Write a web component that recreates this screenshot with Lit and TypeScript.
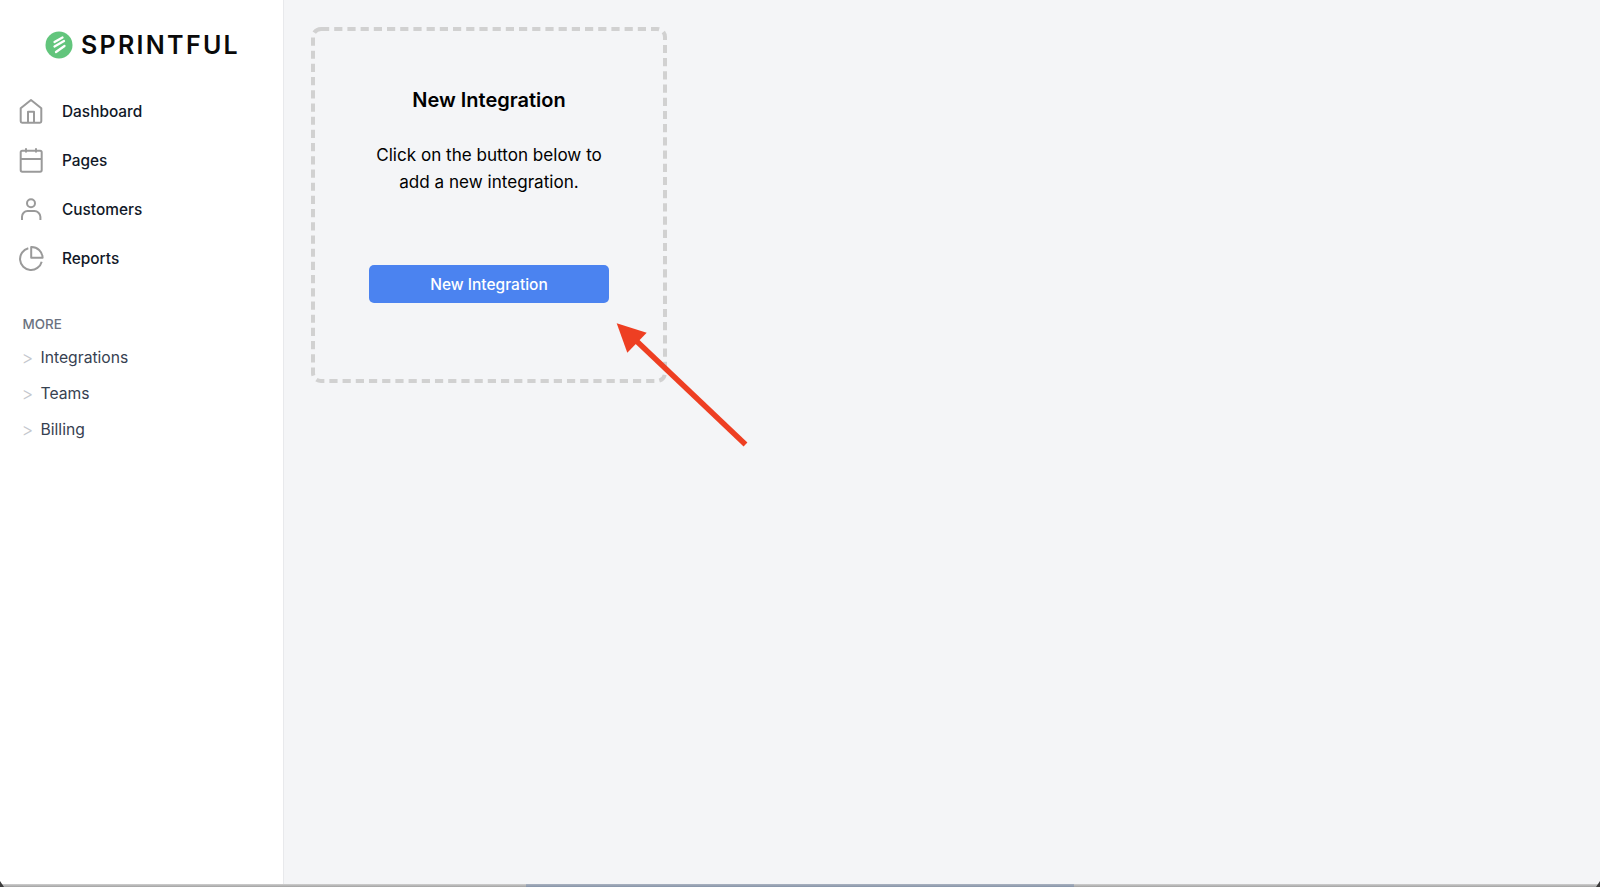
import { LitElement, html, css, svg } from "lit";
import { customElement } from "lit/decorators.js";

const navItems = [
  { label: "Dashboard", icon: svg`<path d="M2.7 10.3 13 2l10.3 8.3V23.3a1.4 1.4 0 0 1-1.4 1.4H4.1a1.4 1.4 0 0 1-1.4-1.4z"/><path d="M10 24.7V13.8h6v10.9"/>` },
  { label: "Pages", icon: svg`<rect x="2.7" y="3.7" width="21" height="21" rx="1.6"/><path d="M2.7 12h21M8 1.3V5.5M18 1.3V5.5"/>` },
  { label: "Customers", icon: svg`<circle cx="13" cy="7.3" r="4"/><path d="M4 24v-3.3a5.6 5.6 0 0 1 5.6-5.6h6.8a6 6 0 0 1 6 5.6V24"/>` },
  { label: "Reports", icon: svg`<path d="M10.3 3.3A11 11 0 1 0 23.7 16.7"/><path d="M13.2 2A11 11 0 0 1 24.6 12.7H13.2z"/>` },
];
const moreItems = ["Integrations", "Teams", "Billing"];

@customElement("app-root")
export class AppRoot extends LitElement {
  static styles = css`
    :host {
      display: block;
      height: 887px;
      position: relative;
      overflow: hidden;
      font-family: Inter, "Liberation Sans", sans-serif;
      background: #f4f5f7;
    }
    .layout { display: flex; height: 100%; }
    .sidebar {
      width: 284px;
      flex: none;
      box-sizing: border-box;
      background: #fff;
      border-right: 1px solid #e8e9ec;
      padding: 30px 0 0 18px;
    }
    .brand {
      display: flex;
      align-items: center;
      gap: 8px;
      margin-left: 27px;
      height: 31px;
      font-size: 25px;
      line-height: 31px;
      font-weight: 600;
      letter-spacing: 2.3px;
      color: #0a0a0a;
    }
    .brand svg { width: 28px; height: 28px; flex: none; margin-top: -2px; }
    .nav { display: flex; flex-direction: column; gap: 23px; margin-top: 37px; }
    .nav-item {
      display: flex;
      align-items: center;
      gap: 18px;
      height: 26px;
      font-size: 15.4px;
      font-weight: 500;
      color: #111827;
    }
    .nav-item svg {
      width: 26px;
      height: 26px;
      flex: none;
      fill: none;
      stroke: #9a9a9a;
      stroke-width: 2;
      stroke-linejoin: round;
    }
    .more-title {
      margin: 45px 0 0 4.5px;
      font-size: 13.4px;
      line-height: 16px;
      font-weight: 500;
      color: #6b7280;
    }
    .more { display: flex; flex-direction: column; gap: 13.8px; margin: 14.5px 0 0 4.5px; }
    .more-item {
      display: flex;
      align-items: center;
      height: 22px;
      font-size: 15.7px;
      font-weight: 400;
      color: #374151;
    }
    .more-item .chev {
      width: 18px;
      padding-top: 1px;
      font-size: 18px;
      font-weight: 300;
      line-height: 22px;
      color: #c4c7cd;
      flex: none;
      margin-left: -1px;
      margin-right: 1px;
    }
    .main { flex: 1; padding: 27px 0 0 27px; }
    .card {
      position: relative;
      box-sizing: border-box;
      width: 356px;
      height: 356px;
      display: flex;
      flex-direction: column;
      align-items: center;
      text-align: center;
      color: #000;
      padding-top: 59px;
    }
    .dash {
      position: absolute;
      inset: 0;
      width: 356px;
      height: 356px;
      fill: none;
      stroke: #d1d1d1;
      stroke-width: 4;
      stroke-dasharray: 8.2 5;
    }
    h2 { margin: 0; font-size: 20px; line-height: 28px; font-weight: 600; }
    p { margin: 28px 0 0; font-size: 17.1px; line-height: 26.5px; font-weight: 400; }
    button {
      margin-top: 70px;
      width: 240px;
      height: 38px;
      border: none;
      border-radius: 5px;
      background: #4b83f0;
      color: #fff;
      font: 500 15.5px Inter, "Liberation Sans", sans-serif;
    }
    .arrow { position: absolute; left: 600px; top: 310px; width: 160px; height: 150px; }
    .edge {
      position: absolute;
      left: 0;
      right: 0;
      bottom: 0;
      height: 3px;
      background: linear-gradient(#cfcfcf, #a2a2a2);
    }
    .edge i {
      position: absolute;
      left: 526px;
      width: 548px;
      top: 0;
      bottom: 0;
      background: linear-gradient(#a9b2c0, #8794a8);
    }
    .corner { position: absolute; bottom: 0; width: 4px; height: 6px; background: #3c3c3c; }
    .corner.l { left: 0; clip-path: polygon(0 0, 100% 100%, 0 100%); }
    .corner.r { right: 0; clip-path: polygon(100% 0, 100% 100%, 0 100%); }
  `;

  render() {
    return html`
      <div class="layout">
        <aside class="sidebar">
          <div class="brand">
            <svg viewBox="0 0 28 28">
              <circle cx="14" cy="14" r="13.5" fill="#62c57c" />
              <path d="M9.5 11 17.5 6.5M9.5 15.5 19 10M11 21l8.5-6" stroke="#fff" stroke-width="2.3" fill="none" stroke-linecap="round" />
            </svg>
            <span>SPRINTFUL</span>
          </div>
          <nav class="nav">
            ${navItems.map(
              (i) => html`<div class="nav-item"><svg viewBox="0 0 26 26">${i.icon}</svg>${i.label}</div>`
            )}
          </nav>
          <div class="more-title">MORE</div>
          <div class="more">
            ${moreItems.map((m) => html`<div class="more-item"><span class="chev">&gt;</span>${m}</div>`)}
          </div>
        </aside>
        <main class="main">
          <section class="card">
            <svg class="dash" viewBox="0 0 356 356"><rect x="2" y="2" width="352" height="352" rx="8" /></svg>
            <h2>New Integration</h2>
            <p>Click on the button below to<br />add a new integration.</p>
            <button>New Integration</button>
          </section>
        </main>
      </div>
      <svg class="arrow" viewBox="0 0 160 150">
        <path d="M145.5 134.5 27 22" stroke="#ee3f22" stroke-width="5.5" fill="none" />
        <path d="M16.7 13.3 46.7 22.7 27.3 42.7z" fill="#ee3f22" />
      </svg>
      <div class="edge"><i></i></div>
      <div class="corner l"></div>
      <div class="corner r"></div>
    `;
  }
}
